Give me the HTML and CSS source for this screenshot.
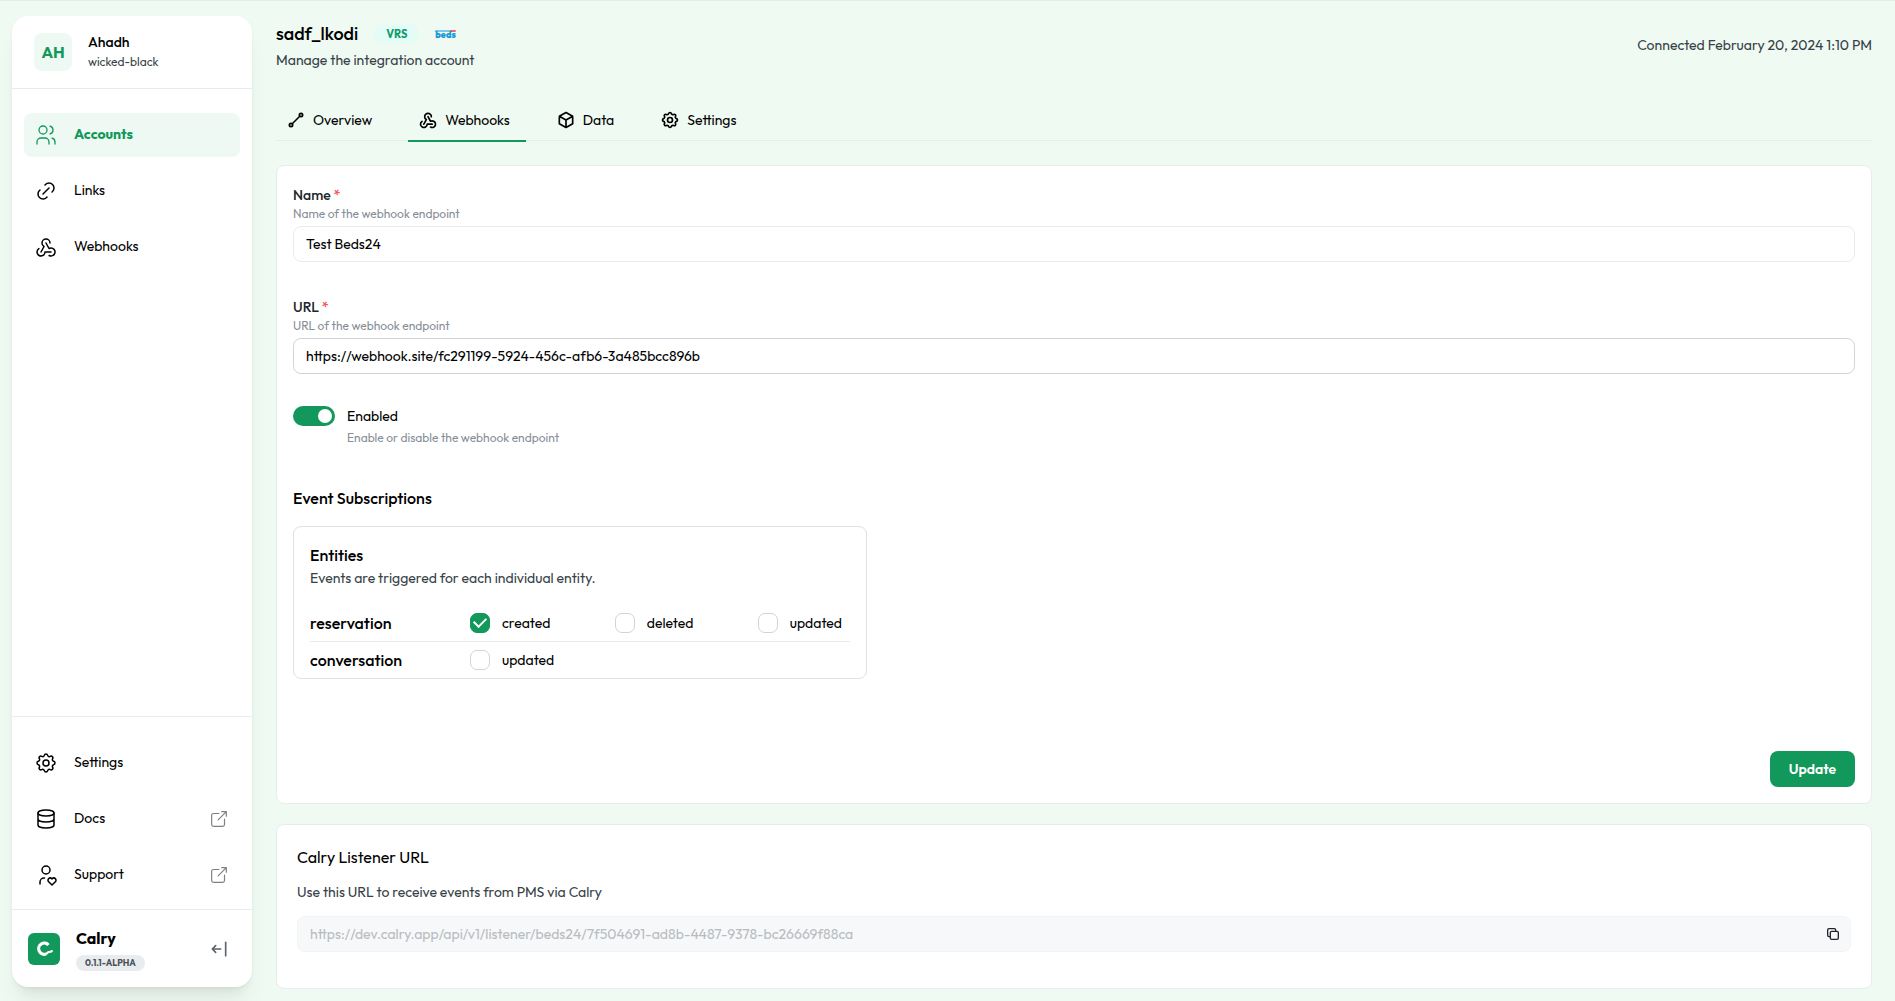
FILE: index.html
```html
<!DOCTYPE html>
<html lang="en">
<head>
<meta charset="utf-8">
<title>Webhooks – Calry</title>
<meta name="viewport" content="width=device-width, initial-scale=1">
<link rel="stylesheet" href="styles.css">
</head>
<body>
<svg class="sprite" aria-hidden="true">
  <symbol id="i-users" viewBox="0 0 24 24"><circle cx="9" cy="7" r="4"/><path d="M3 21v-2a4 4 0 0 1 4-4h4a4 4 0 0 1 4 4v2M16 3.130a4 4 0 0 1 0 7.750M21 21v-2a4 4 0 0 0-3-3.850"/></symbol>
  <symbol id="i-link" viewBox="0 0 24 24"><path d="M9 15l6-6M11 6l.463-.536a5 5 0 0 1 7.071 7.072L18 13M13 18l-.397.534a5.068 5.068 0 0 1-7.127 0 4.972 4.972 0 0 1 0-7.071L6 11"/></symbol>
  <symbol id="i-webhook" viewBox="0 0 24 24"><path d="M4.876 13.610A4 4 0 1 0 11 17h6M15.066 20.502A4 4 0 1 0 17 13c-.706 0-1.424.179-2 .500L12 8M16 8a4 4 0 1 0-8 0c0 1.506.770 2.818 2 3.500L7 17"/></symbol>
  <symbol id="i-gear" viewBox="0 0 24 24"><path d="M10.325 4.317c.426-1.756 2.924-1.756 3.350 0a1.724 1.724 0 0 0 2.573 1.066c1.543-.940 3.310.826 2.370 2.370a1.724 1.724 0 0 0 1.065 2.572c1.756.426 1.756 2.924 0 3.350a1.724 1.724 0 0 0-1.066 2.573c.940 1.543-.826 3.310-2.370 2.370a1.724 1.724 0 0 0-2.572 1.065c-.426 1.756-2.924 1.756-3.350 0a1.724 1.724 0 0 0-2.573-1.066c-1.543.940-3.310-.826-2.370-2.370a1.724 1.724 0 0 0-1.065-2.572c-1.756-.426-1.756-2.924 0-3.350a1.724 1.724 0 0 0 1.066-2.573c-.940-1.543.826-3.310 2.370-2.370 1 .608 2.296.070 2.572-1.065z"/><circle cx="12" cy="12" r="3"/></symbol>
  <symbol id="i-database" viewBox="0 0 24 24"><ellipse cx="12" cy="6" rx="8" ry="3"/><path d="M4 6v6a8 3 0 0 0 16 0V6M4 12v6a8 3 0 0 0 16 0v-6"/></symbol>
  <symbol id="i-support" viewBox="0 0 24 24"><circle cx="12" cy="7" r="4"/><path d="M6 21v-2a4 4 0 0 1 4-4h.500M18 22l3.350-3.284a2.143 2.143 0 0 0 .005-3.071 2.242 2.242 0 0 0-3.129-.006l-.224.220-.223-.220a2.242 2.242 0 0 0-3.128-.006 2.143 2.143 0 0 0-.006 3.071z"/></symbol>
  <symbol id="i-external" viewBox="0 0 24 24"><path d="M12 6H6a2 2 0 0 0-2 2v10a2 2 0 0 0 2 2h10a2 2 0 0 0 2-2v-6M11 13l9-9M15 4h5v5"/></symbol>
  <symbol id="i-collapse" viewBox="0 0 24 24"><path d="M4 12h10M4 12l4 4M4 12l4-4M20 4v16"/></symbol>
  <symbol id="i-line" viewBox="0 0 24 24"><circle cx="6" cy="18" r="2"/><circle cx="18" cy="6" r="2"/><path d="M7.500 16.500l9-9"/></symbol>
  <symbol id="i-box" viewBox="0 0 24 24"><path d="M12 3l8 4.500v9L12 21l-8-4.500v-9zM12 12l8-4.500M12 12v9M12 12L4 7.500"/></symbol>
  <symbol id="i-copy" viewBox="0 0 24 24"><rect x="8" y="8" width="12" height="12" rx="2"/><path d="M16 8V6a2 2 0 0 0-2-2H6a2 2 0 0 0-2 2v8a2 2 0 0 0 2 2h2"/></symbol>
</svg>
<div class="app">
  <aside class="sidebar">
    <div class="profile">
      <span class="avatar">AH</span>
      <div>
        <div class="profile-name">Ahadh</div>
        <div class="profile-org">wicked-black</div>
      </div>
    </div>
    <nav class="nav" aria-label="Main">
      <a class="nav-item active" href="#accounts"><svg class="icon"><use href="#i-users"/></svg><span class="nav-label">Accounts</span></a>
      <a class="nav-item" href="#links"><svg class="icon"><use href="#i-link"/></svg><span class="nav-label">Links</span></a>
      <a class="nav-item" href="#webhooks"><svg class="icon"><use href="#i-webhook"/></svg><span class="nav-label">Webhooks</span></a>
    </nav>
    <nav class="nav nav-bottom" aria-label="Secondary">
      <a class="nav-item" href="#settings"><svg class="icon"><use href="#i-gear"/></svg><span class="nav-label">Settings</span></a>
      <a class="nav-item" href="#docs"><svg class="icon"><use href="#i-database"/></svg><span class="nav-label">Docs</span><svg class="icon external"><use href="#i-external"/></svg></a>
      <a class="nav-item" href="#support"><svg class="icon"><use href="#i-support"/></svg><span class="nav-label">Support</span><svg class="icon external"><use href="#i-external"/></svg></a>
    </nav>
    <div class="brand">
      <svg class="brand-logo" viewBox="0 0 32 32" aria-hidden="true"><rect width="32" height="32" rx="6"/><path d="M20.500 12A5.600 5.600 0 1 0 18 21" stroke-width="3.200"/><path d="M16 21.300q2.800-.200 4-2M19.500 19h2q2 0 2.900-1.600" stroke-width="2.200"/></svg>
      <div class="brand-text">
        <div class="brand-name">Calry</div>
        <span class="version">0.1.1-ALPHA</span>
      </div>
      <button class="icon-button collapse" type="button" aria-label="Collapse sidebar"><svg class="icon"><use href="#i-collapse"/></svg></button>
    </div>
  </aside>
  <main class="main">
    <header class="page-header">
      <div>
        <div class="title-row">
          <h1>sadf_lkodi</h1>
          <span class="tag">VRS</span>
          <span class="beds">beds</span>
        </div>
        <p class="subtitle">Manage the integration account</p>
      </div>
      <p class="connected">Connected February 20, 2024 1:10 PM</p>
    </header>
    <nav class="tabs" aria-label="Account sections">
      <a class="tab" href="#overview"><svg class="icon"><use href="#i-line"/></svg>Overview</a>
      <a class="tab current" href="#account-webhooks" aria-current="page"><svg class="icon"><use href="#i-webhook"/></svg>Webhooks</a>
      <a class="tab" href="#data"><svg class="icon"><use href="#i-box"/></svg>Data</a>
      <a class="tab" href="#account-settings"><svg class="icon"><use href="#i-gear"/></svg>Settings</a>
    </nav>
    <form class="card form">
      <div class="field">
        <label for="name">Name <span class="required">*</span></label>
        <p class="hint">Name of the webhook endpoint</p>
        <input class="input soft" id="name" type="text" value="Test Beds24">
      </div>
      <div class="field">
        <label for="url">URL <span class="required">*</span></label>
        <p class="hint">URL of the webhook endpoint</p>
        <input class="input" id="url" type="text" value="https://webhook.site/fc291199-5924-456c-afb6-3a485bcc896b">
      </div>
      <div class="switch-row">
        <input class="switch" id="enabled" type="checkbox" role="switch" checked>
        <div>
          <label for="enabled">Enabled</label>
          <p class="hint">Enable or disable the webhook endpoint</p>
        </div>
      </div>
      <h2>Event Subscriptions</h2>
      <section class="entities">
        <h3>Entities</h3>
        <p class="entities-text">Events are triggered for each individual entity.</p>
        <div class="entity">
          <span class="entity-name">reservation</span>
          <div class="events">
            <label class="check"><input type="checkbox" checked>created</label>
            <label class="check"><input type="checkbox">deleted</label>
            <label class="check"><input type="checkbox">updated</label>
          </div>
        </div>
        <div class="entity">
          <span class="entity-name">conversation</span>
          <div class="events">
            <label class="check"><input type="checkbox">updated</label>
          </div>
        </div>
      </section>
      <button class="update" type="submit">Update</button>
    </form>
    <section class="card listener">
      <h2><label for="listener">Calry Listener URL</label></h2>
      <p>Use this URL to receive events from PMS via Calry</p>
      <div class="copy-field">
        <input id="listener" type="text" disabled value="https://dev.calry.app/api/v1/listener/beds24/7f504691-ad8b-4487-9378-bc26669f88ca">
        <button class="icon-button" type="button" aria-label="Copy URL"><svg class="icon"><use href="#i-copy"/></svg></button>
      </div>
    </section>
  </main>
</div>
</body>
</html>
```
FILE: styles.css
```css
:root {
  --green: #12985a;
  --mint: #effaf2;
  --line: #e9ecef;
  --gray: #868e96;
  --dark: #373f47;
}
* { box-sizing: border-box; }
body {
  margin: 0;
  background: var(--mint);
  border-top: 1px solid #e3eee6;
  color: #000;
  font: 14px/20px Outfit, Lato, sans-serif;
}
h1, h2, h3, p { margin: 0; font-weight: 500; }
p { font-weight: 400; }
a { color: inherit; text-decoration: none; }
input, button { font: inherit; }
.sprite { display: none; }
.icon {
  width: 24px;
  height: 24px;
  flex: none;
  fill: none;
  stroke: currentColor;
  stroke-width: 2;
  stroke-linecap: round;
  stroke-linejoin: round;
}
.app {
  display: flex;
  gap: 24px;
  min-height: calc(100vh - 1px);
  padding: 15px 23px 0 12px;
}

/* Sidebar */
.sidebar {
  display: flex;
  flex-direction: column;
  flex: none;
  width: 240px;
  height: calc(100vh - 30px);
  background: #fff;
  border-radius: 16px;
  box-shadow: 0 1px 3px rgba(0, 0, 0, .05), 0 20px 25px -5px rgba(0, 0, 0, .06), 0 10px 10px -5px rgba(0, 0, 0, .05);
}
.profile {
  display: flex;
  align-items: center;
  gap: 16px;
  height: 73px;
  padding: 0 22px;
  border-bottom: 1px solid var(--line);
}
.avatar {
  display: grid;
  place-items: center;
  width: 38px;
  height: 38px;
  border-radius: 8px;
  background: #eef9f4;
  color: var(--green);
  font-size: 16px;
  font-weight: 700;
}
.profile-name { font-weight: 500; }
.profile-org { font-size: 12px; color: var(--dark); }
.nav {
  display: flex;
  flex-direction: column;
  gap: 12px;
  padding: 24px 12px;
}
.nav-item {
  display: flex;
  align-items: center;
  gap: 16px;
  height: 44px;
  padding: 0 10px;
  border-radius: 8px;
}
.nav-label { padding-bottom: 2px; }
.nav-item.active {
  background: #eef9f4;
  color: var(--green);
  font-weight: 700;
}
.nav-item .icon { stroke-width: 1.5; }
.nav-item.active .icon { stroke-width: 1.3; }
.nav-item .external { width: 22px; height: 22px; margin-left: auto; color: gray; stroke-width: 1.3; }
.nav-bottom { margin-top: auto; padding-bottom: 12px; border-top: 1px solid var(--line); }
.brand {
  display: flex;
  align-items: center;
  gap: 16px;
  height: 78px;
  padding: 0 23px 0 16px;
  border-top: 1px solid var(--line);
}
.brand-logo { width: 32px; height: 32px; fill: none; stroke: #fff; }
.brand-logo rect { fill: var(--green); stroke: none; }
.brand-name { font-size: 16px; line-height: 24px; font-weight: 700; }
.version {
  display: block;
  margin-top: 5px;
  padding: 0 9px;
  border-radius: 8px;
  background: var(--line);
  color: #495057;
  font-size: 9px;
  line-height: 16px;
  font-weight: 700;
}
.icon-button {
  display: grid;
  place-items: center;
  padding: 0;
  border: 0;
  background: none;
  color: #212529;
  cursor: pointer;
}
.collapse { margin-left: auto; color: #5c636a; }
.collapse .icon { width: 20px; height: 20px; }

/* Main */
.main { flex: 1; min-width: 0; }
.page-header {
  display: flex;
  justify-content: space-between;
  align-items: center;
  height: 56px;
}
.title-row { display: flex; align-items: center; gap: 16px; height: 32px; }
h1 { font-size: 18px; }
.tag {
  padding: 0 12px;
  border-radius: 10px;
  background: #e3fcf5;
  color: #0c9a6a;
  font-size: 11px;
  font-weight: 700;
}
.beds {
  background: linear-gradient(90deg, #7cc8e8 75%, #ee6a70 75%) top / 100% 2px no-repeat;
  color: #1c9ad6;
  font-size: 9px;
  font-weight: 900;
  line-height: 9px;
}
.subtitle, .connected { color: var(--dark); }
.connected { padding-top: 2px; }
.tabs {
  display: flex;
  gap: 20px;
  margin-top: 24px;
  border-bottom: 1px solid var(--line);
}
.tab {
  display: flex;
  align-items: center;
  gap: 7px;
  height: 46px;
  padding: 4px 16px 0 10px;
  margin-bottom: -2px;
  border-bottom: 2px solid transparent;
}
.tab.current { border-color: var(--green); }
.tab .icon { width: 20px; height: 20px; }
.card {
  border: 1px solid var(--line);
  border-radius: 8px;
  background: #fff;
}
.form { display: flex; flex-direction: column; margin-top: 24px; padding: 19px 16px 16px; }
.field { margin-bottom: 35px; }
.field + .field { margin-bottom: 32px; }
.field label { font-weight: 500; color: #212529; }
.field .hint { margin-bottom: 3px; }
.required { color: #fa5252; }
.hint { font-size: 12px; line-height: 18px; color: var(--gray); }
.input {
  display: block;
  width: 100%;
  height: 36px;
  padding: 0 12px;
  border: 1px solid #ced4da;
  border-radius: 8px;
  background: #fff;
}
.input.soft { border-color: var(--line); }
.switch-row { display: flex; gap: 12px; }
.switch-row .hint { margin-top: 3px; }
.switch {
  appearance: none;
  display: flex;
  justify-content: flex-end;
  width: 42px;
  height: 20px;
  margin: 0;
  padding: 3px;
  border-radius: 10px;
  background: var(--green);
}
.switch::before { content: ""; width: 14px; height: 14px; border-radius: 50%; background: #fff; }
.form h2 { margin-top: 41px; font-size: 16px; }
.entities {
  width: 574px;
  max-width: 100%;
  margin-top: 18px;
  padding: 16px 16px 0;
  border: 1px solid #dee2e6;
  border-radius: 8px;
}
h3 { font-size: 16px; line-height: 24px; }
.entities-text { margin-top: 1px; color: var(--dark); }
.entity { display: flex; align-items: center; height: 37px; }
.entity + .entity { border-top: 1px solid var(--line); }
.entities-text + .entity { margin-top: 16px; }
.entity-name { width: 160px; font-size: 16px; font-weight: 500; }
.events { display: flex; flex: 1; justify-content: space-between; padding-right: 8px; }
.check { display: flex; align-items: center; gap: 12px; }
.check input {
  appearance: none;
  display: grid;
  place-items: center;
  width: 20px;
  height: 20px;
  margin: 0;
  border: 1px solid #ced4da;
  border-radius: 7px;
  background: #fff;
}
.check input:checked { border-color: var(--green); background: var(--green); }
.check input:checked::before {
  content: "";
  width: 10px;
  height: 6px;
  margin-bottom: 3px;
  border: solid #fff;
  border-width: 0 0 2px 2px;
  transform: rotate(-45deg);
}
.update {
  align-self: flex-end;
  height: 36px;
  margin-top: 72px;
  padding: 0 19px;
  border: 0;
  border-radius: 8px;
  background: var(--green);
  color: #fff;
  font-weight: 600;
}
.listener { margin-top: 20px; padding: 19px 20px 36px; }
.listener h2 { font-size: 16px; line-height: 26px; font-weight: 400; }
.listener p { margin-top: 12px; color: var(--dark); }
.copy-field {
  display: flex;
  align-items: center;
  height: 36px;
  margin-top: 14px;
  padding: 0 9px 0 12px;
  border: 1px solid #f1f3f5;
  border-radius: 8px;
  background: #f6f8fa;
}
.copy-field input { flex: 1; padding: 0; border: 0; background: none; color: #b9bcbf; }
.copy-field .icon { width: 16px; height: 16px; }
```
